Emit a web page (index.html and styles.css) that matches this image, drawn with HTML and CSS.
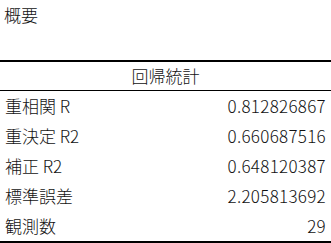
FILE: index.html
```html
<!DOCTYPE html>
<html lang="ja">
<head>
<meta charset="utf-8">
<link rel="stylesheet" href="styles.css">
</head>
<body>
<div class="title">概要</div>
<table class="stats">
  <thead>
    <tr><th colspan="2">回帰統計</th></tr>
  </thead>
  <tbody>
    <tr><td>重相関 R</td><td class="num">0.812826867</td></tr>
    <tr><td>重決定 R2</td><td class="num">0.660687516</td></tr>
    <tr><td>補正 R2</td><td class="num">0.648120387</td></tr>
    <tr><td>標準誤差</td><td class="num">2.205813692</td></tr>
    <tr class="last"><td>観測数</td><td class="num">29</td></tr>
  </tbody>
</table>
</body>
</html>
```
FILE: styles.css
```css
html, body {
  margin: 0;
  padding: 0;
  background: #fff;
}
body {
  width: 331px;
  height: 243px;
  overflow: hidden;
  font-family: "Noto Sans CJK JP", "Noto Sans", sans-serif;
  font-size: 17px;
  font-weight: 300;
  color: #111;
}
.title {
  height: 30px;
  line-height: 30px;
  padding-left: 4px;
  margin-bottom: 30px;
}
.stats {
  width: 331px;
  border-collapse: collapse;
  border-top: 2px solid #000;
  border-bottom: 2px solid #000;
}
.stats th {
  font-weight: 300;
  text-align: center;
  height: 28px;
  line-height: 28px;
  padding: 0;
  border-bottom: 1px solid #000;
}
.stats td {
  height: 30px;
  padding: 0 5px 0 5px;
  line-height: 30px;
}
.stats tr.last td {
  height: 29px;
}
.stats td.num {
  text-align: right;
  letter-spacing: 0.3px;
}
```
